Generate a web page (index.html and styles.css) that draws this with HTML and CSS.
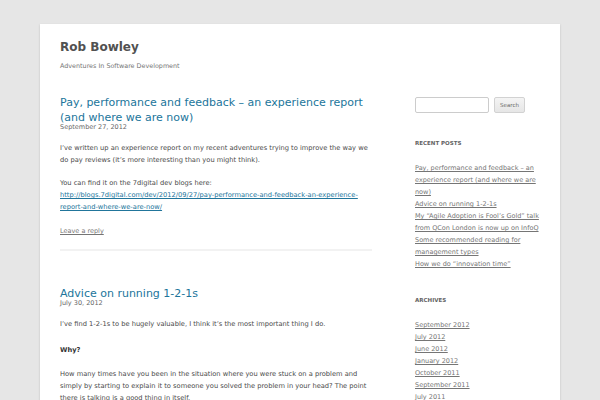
FILE: index.html
```html
<!DOCTYPE html>
<html>
  <head>
    <meta charset="UTF-8">
    <title>Rob Bowley | Adventures In Software Development</title>
    <link rel="stylesheet" href="styles.css">
  </head>
  <body>
    <div class="site">
      <header class="site-header">
        <h1 class="site-title">Rob Bowley</h1>
        <p class="site-description">Adventures In Software Development</p>
      </header>

      <div class="site-main">
        <div class="content">
          <article class="post">
            <h2 class="post__title"><a href="#">Pay, performance and feedback &ndash; an experience report (and where we are now)</a></h2>
            <div class="post__date">September 27, 2012</div>
            <div class="post__body">
              <p>I&rsquo;ve written up an experience report on my recent adventures trying to improve the way we do pay reviews (it&rsquo;s more interesting than you might think).</p>
              <p>You can find it on the 7digital dev blogs here:<br><a href="#">http://blogs.7digital.com/dev/2012/09/27/pay-performance-and-feedback-an-experience-report-and-where-we-are-now/</a></p>
            </div>
            <footer class="post__meta"><a href="#">Leave a reply</a></footer>
          </article>

          <article class="post">
            <h2 class="post__title"><a href="#">Advice on running 1-2-1s</a></h2>
            <div class="post__date">July 30, 2012</div>
            <div class="post__body">
              <p>I&rsquo;ve find 1-2-1s to be hugely valuable, I think it&rsquo;s the most important thing I do.</p>
              <p class="post__subhead"><strong>Why?</strong></p>
              <p>How many times have you been in the situation where you were stuck on a problem and simply by starting to explain it to someone you solved the problem in your head? The point there is talking is a good thing in itself.</p>
            </div>
          </article>
        </div>

        <aside class="sidebar">
          <form class="search">
            <input class="search__field" type="text">
            <button class="search__button" type="button">Search</button>
          </form>

          <section class="widget">
            <h3 class="widget__title">Recent Posts</h3>
            <ul class="widget__list">
              <li><a href="#">Pay, performance and feedback &ndash; an experience report (and where we are now)</a></li>
              <li><a href="#">Advice on running 1-2-1s</a></li>
              <li><a href="#">My &ldquo;Agile Adoption is Fool&rsquo;s Gold&rdquo; talk from QCon London is now up on InfoQ</a></li>
              <li><a href="#">Some recommended reading for management types</a></li>
              <li><a href="#">How we do &ldquo;innovation time&rdquo;</a></li>
            </ul>
          </section>

          <section class="widget">
            <h3 class="widget__title">Archives</h3>
            <ul class="widget__list">
              <li><a href="#">September 2012</a></li>
              <li><a href="#">July 2012</a></li>
              <li><a href="#">June 2012</a></li>
              <li><a href="#">January 2012</a></li>
              <li><a href="#">October 2011</a></li>
              <li><a href="#">September 2011</a></li>
              <li><a href="#">July 2011</a></li>
            </ul>
          </section>
        </aside>
      </div>
    </div>
  </body>
</html>
```

FILE: styles.css
```css
* {
  box-sizing: border-box;
}
body {
  margin: 0;
  background-color: #e6e6e6;
  font-family: "DejaVu Sans", sans-serif;
  color: #4a4a4a;
  font-size: 6.7px;
  line-height: 12px;
  height: 400px;
  overflow: hidden;
}
a {
  color: #21759b;
}

.site {
  width: 520px;
  margin: 24px auto 0;
  padding: 0 20px;
  background-color: #fff;
  box-shadow: 0 1px 2px rgba(100,100,100,0.3);
  min-height: 400px;
}

.site-header {
  padding: 12px 0 23px;
}
.site-title {
  margin: 0;
  font-size: 12px;
  line-height: 22px;
  font-weight: 700;
  color: #515151;
}
.site-description {
  margin: 2px 0 0;
  font-size: 6.4px;
  line-height: 12px;
  color: #757575;
}

.site-main {
  display: flex;
  justify-content: space-between;
}
.content {
  width: 312px;
}
.sidebar {
  width: 125px;
  padding-top: 2px;
}

.post {
  padding-bottom: 12px;
  margin-bottom: 35px;
  border-bottom: 2px solid #f2f2f2;
}
.post:last-child {
  border-bottom: none;
}
.post__title {
  margin: 0;
  font-size: 11px;
  line-height: 15px;
  font-weight: 400;
}
.post__title a {
  text-decoration: none;
}
.post__date {
  margin-top: -2px;
  font-size: 6.5px;
  line-height: 8px;
  color: #666;
}
.post__body p {
  margin: 11px 0 0;
}
.post__body .post__subhead {
  margin: 14px 0 12px;
  color: #333;
}
.post__meta {
  margin-top: 12px;
  font-size: 6.5px;
  line-height: 12px;
}
.post__meta a {
  color: #757575;
}

.search {
  display: flex;
  gap: 5px;
  margin-bottom: 24px;
}
.search__field {
  width: 74px;
  height: 16px;
  padding: 0;
  border: 1px solid #ccc;
  border-radius: 2px;
}
.search__button {
  height: 16px;
  width: 31px;
  padding: 0;
  font-family: "DejaVu Sans", sans-serif;
  font-size: 5.5px;
  color: #6a6a6a;
  border: 1px solid #d2d2d2;
  border-radius: 2px;
  background: linear-gradient(#f4f4f4, #e6e6e6);
}

.widget {
  margin-bottom: 24px;
}
.widget__title {
  margin: 0 0 13px;
  font-size: 5.5px;
  line-height: 12px;
  font-weight: 700;
  text-transform: uppercase;
  color: #636363;
}
.widget__list {
  list-style: none;
  margin: 0;
  padding: 0;
  font-size: 6.5px;
  line-height: 12px;
}
.widget__list a {
  color: #757575;
}
```
